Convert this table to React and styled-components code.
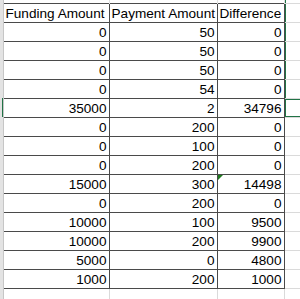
import React from "react";
import styled, { createGlobalStyle, css } from "styled-components";

const Global = createGlobalStyle`
  html, body { margin: 0; padding: 0; background: #fff; }
  body { font-family: "Liberation Sans", Arial, sans-serif; }
`;

const Sheet = styled.div`
  width: 300px;
  height: 299px;
  overflow: hidden;
  background: #fff;
`;

const Grid = styled.table`
  border-collapse: collapse;
  table-layout: fixed;
  width: 330px;
  font-size: 13.6px;
  color: #000;
`;

const EdgeCell = styled.td`
  padding: 0;
  background: #e3e3e3;
  border: none;
  border-right: 1px solid #c6c6c6;
  ${(p) =>
    p.$active &&
    css`
      box-shadow: inset -1px 0 0 #217346;
    `}
`;

const SpacerRow = styled.tr`
  height: 3px;
`;

const SpacerCell = styled.td`
  padding: 0;
  border: none;
  border-right: 1px solid #e1e1e1;
  ${(p) =>
    p.$sel &&
    css`
      box-shadow: inset 1px 0 0 #217346;
    `}
`;

const DataCell = styled.td`
  position: relative;
  border: 1px solid #4a4a4a;
  box-sizing: border-box;
  height: 19px;
  padding: 1px 2px 0 2px;
  text-align: ${(p) => (p.$header ? "left" : "right")};
  white-space: nowrap;
  overflow: hidden;
  line-height: 17px;
  ${(p) =>
    p.$flag &&
    css`
      &::before {
        content: "";
        position: absolute;
        left: 0;
        top: 0;
        border-top: 5px solid #1e7a1e;
        border-right: 5px solid transparent;
      }
    `}
`;

const EmptyCell = styled.td`
  border: 1px solid #dadada;
  box-sizing: border-box;
  height: 19px;
  padding: 0;
  ${(p) =>
    p.$sel &&
    css`
      box-shadow: inset 1px 0 0 #217346;
    `}
  ${(p) =>
    p.$active &&
    css`
      box-shadow: inset 0 0 0 1px #217346;
    `}
`;

const TrailCell = styled.td`
  border: 1px solid #dadada;
  border-bottom: none;
  padding: 0;
  height: 12px;
`;

const widths = [3, 106, 108, 67, 46];
const ACTIVE_ROW = 5;
const FLAG = { row: 9, col: 2 };

const rows = [
  [0, 50, 0],
  [0, 50, 0],
  [0, 50, 0],
  [0, 54, 0],
  [35000, 2, 34796],
  [0, 200, 0],
  [0, 100, 0],
  [0, 200, 0],
  [15000, 300, 14498],
  [0, 200, 0],
  [10000, 100, 9500],
  [10000, 200, 9900],
  [5000, 0, 4800],
  [1000, 200, 1000],
];

const header = ["Funding Amount", "Payment Amount", "Difference"];

export default function App() {
  const all = [header, ...rows];
  return (
    <>
      <Global />
      <Sheet>
        <Grid>
          <colgroup>
            {widths.map((w, i) => (
              <col key={i} style={{ width: w }} />
            ))}
          </colgroup>
          <tbody>
            <SpacerRow>
              <EdgeCell />
              <SpacerCell />
              <SpacerCell />
              <SpacerCell />
              <SpacerCell $sel />
            </SpacerRow>
            {all.map((r, i) => (
              <tr key={i}>
                <EdgeCell $active={i === ACTIVE_ROW} />
                {r.map((v, j) => (
                  <DataCell
                    key={j}
                    $header={i === 0}
                    $flag={i === FLAG.row && j === FLAG.col}
                  >
                    {v}
                  </DataCell>
                ))}
                <EmptyCell $sel={i < ACTIVE_ROW} $active={i === ACTIVE_ROW} />
              </tr>
            ))}
            <tr>
              <EdgeCell />
              <TrailCell />
              <TrailCell />
              <TrailCell />
              <TrailCell />
            </tr>
          </tbody>
        </Grid>
      </Sheet>
    </>
  );
}
